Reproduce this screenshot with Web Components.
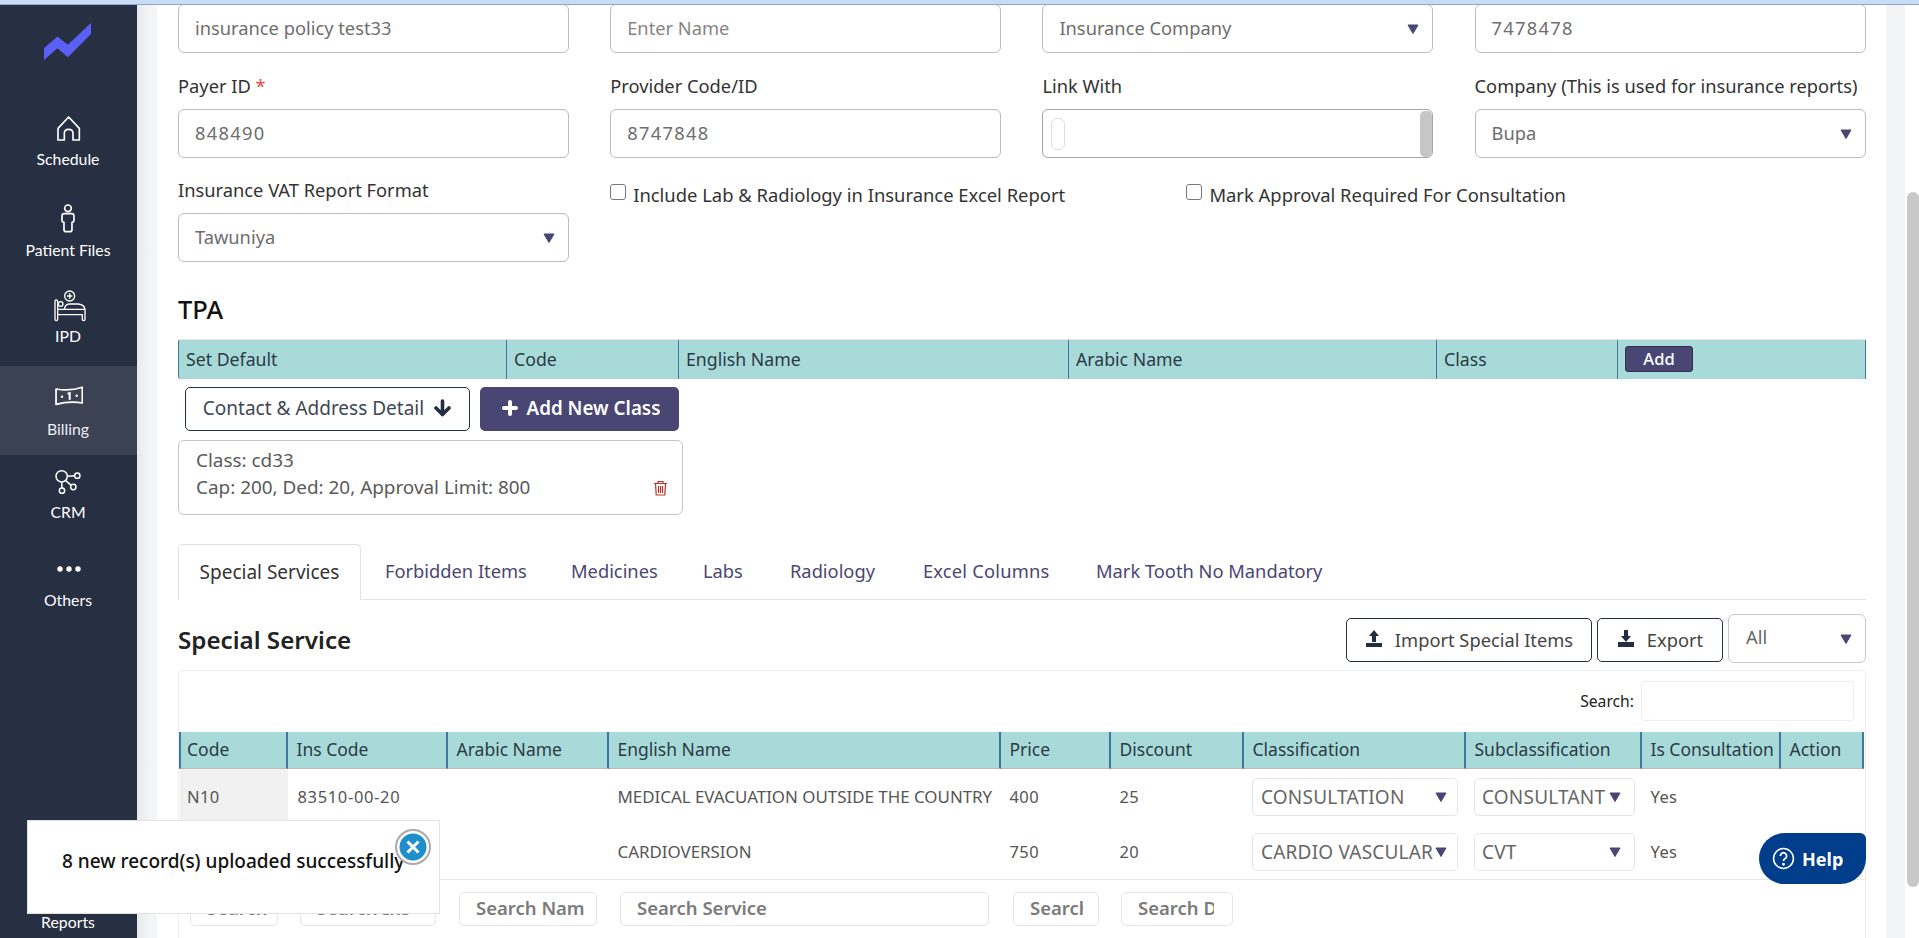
<!DOCTYPE html>
<html><head><meta charset="utf-8">
<style>
html,body{margin:0;height:100%;overflow:hidden;background:#fff;font-family:"Noto Sans",sans-serif}
</style></head><body>
<app-shell>
  <side-nav slot="nav">
    <nav-item style="--mt:53px;--gap:6px"><svg width="25" height="26.700" viewBox="165 345 75 80" fill="none" stroke="#fff" stroke-width="5" stroke-linejoin="round"><path d="M203 351 171 385v35h19v-20q0-12 13-12t13 12v20h19v-35z"/></svg><span slot="label">Schedule</span></nav-item>
    <nav-item style="--mt:34px;--gap:7px"><svg width="18.300" height="30" viewBox="175 610 55 90" fill="none" stroke="#fff" stroke-width="5" stroke-linejoin="round"><circle cx="202" cy="626" r="10"/><path d="M190 642h24q6 0 6 8v12q0 6-6 6v22q0 6-6 6h-12q-6 0-6-6v-22q-6 0-6-6v-12q0-8 6-8z"/></svg><span slot="label">Patient Files</span></nav-item>
    <nav-item style="--mt:30px;--gap:6px"><svg width="60" height="50" viewBox="0 0 180 150" fill="none" stroke="#fff" stroke-width="4" stroke-linejoin="round"><path d="M48 62q4-6 8 2v54q0 4-4 4t-4-4zM56 104h74v14q0 4 4 4t4-4V88q-2-14-20-16H90q-12 1-14 16M56 88h82"/><circle cx="65" cy="72" r="7"/><circle cx="92" cy="48" r="15"/><path d="M92 40v16M84 48h16" stroke-width="4.500"/></svg><span slot="label">IPD</span></nav-item>
    <nav-item active style="--mt:20px;--gap:8px"><svg width="28" height="20" viewBox="42 22 80 56" fill="none" stroke="#fff" stroke-width="5" stroke-linejoin="round"><path d="M45 30Q85 37 120 25V70Q85 63 45 74z"/><path d="M78 44l6-3v20" stroke-width="6"/><circle cx="62" cy="52" r="3.500" fill="#fff" stroke="none"/><circle cx="104" cy="49" r="3.500" fill="#fff" stroke="none"/></svg><span slot="label">Billing</span></nav-item>
    <nav-item style="--mt:11px;--gap:6px"><svg width="28.300" height="28.300" viewBox="50 262 85 85" fill="none" stroke="#fff" stroke-width="4.500"><circle cx="73" cy="290" r="17"/><circle cx="120" cy="288" r="8"/><circle cx="108" cy="322" r="8"/><circle cx="74" cy="333" r="8"/><path d="M90 290l22-2M85 303l17 14M73 307l1 18"/></svg><span slot="label">CRM</span></nav-item>
    <nav-item style="--mt:32px;--gap:6px"><svg width="30" height="30" viewBox="0 0 30 30" fill="#fff"><circle cx="6" cy="15" r="2.700"/><circle cx="15" cy="15" r="2.700"/><circle cx="24" cy="15" r="2.700"/></svg><span slot="label">Others</span></nav-item>
    <nav-item bottom><span slot="label">Reports</span></nav-item>
  </side-nav>

  <form-grid>
    <form-field nolabel style="margin-bottom:1px"><text-box>insurance policy test33</text-box></form-field>
    <form-field nolabel style="margin-bottom:1px"><text-box ph>Enter Name</text-box></form-field>
    <form-field nolabel style="margin-bottom:1px"><select-box>Insurance Company</select-box></form-field>
    <form-field nolabel style="margin-bottom:1px"><text-box num>7478478</text-box></form-field>

    <form-field><span slot="label">Payer ID <b style="color:#e44;font-weight:400">*</b></span><text-box num>848490</text-box></form-field>
    <form-field><span slot="label">Provider Code/ID</span><text-box num>8747848</text-box></form-field>
    <form-field><span slot="label">Link With</span><link-box></link-box></form-field>
    <form-field><span slot="label">Company (This is used for insurance reports)</span><select-box>Bupa</select-box></form-field>

    <form-field><span slot="label">Insurance VAT Report Format</span><select-box>Tawuniya</select-box></form-field>
    <check-line>Include Lab &amp; Radiology in Insurance Excel Report</check-line>
    <check-line style="grid-column:3/5;margin-left:144px">Mark Approval Required For Consultation</check-line>
  </form-grid>

  <section-title style="--mt:33px">TPA</section-title>
  <tpa-head></tpa-head>

  <action-row>
    <out-button style="width:285px">Contact &amp; Address Detail <svg slot="after" width="19" height="18" viewBox="0 0 19 18" fill="none" stroke="#252d40" stroke-width="3.600" stroke-linecap="round" stroke-linejoin="round"><path d="M9.500 2v13M3 9l6.500 6.500L16 9"/></svg></out-button>
    <solid-button></solid-button>
  </action-row>

  <class-card></class-card>

  <tab-strip></tab-strip>

  <service-head></service-head>

  <service-table></service-table>

  <toast-box></toast-box>
  <help-button></help-button>
</app-shell>

<template id="t-shell">
<style>
:host{display:flex;height:938px;overflow:hidden;position:relative;color:#333}
.band{position:absolute;left:0;right:0;top:0;height:4px;background:#c9dcf6;border-bottom:1px solid #8fa7c8;z-index:5}
.nav{flex:0 0 137px}
.gutter{flex:0 0 20px;background:linear-gradient(90deg,#e8eaee,#f4f5f7 70%)}
.page{flex:0 0 1729px;box-sizing:border-box;padding:4px 20px 0 21px;background:#fff;overflow:hidden}
.gutter.r{flex:0 0 19px;background:#f3f4f6}
.bar{flex:0 0 14px;background:#fff;display:flex;flex-direction:column}
.bar i{display:block;margin:192px 0 0 2px;height:695px;border-radius:6px;background:#c8c8c8}
</style>
<div class="band"></div>
<div class="nav"><slot name="nav"></slot></div>
<div class="gutter"></div>
<div class="page"><slot></slot></div>
<div class="gutter r"></div>
<div class="bar"><i></i></div>
</template>

<script>
const arrow='<svg class="arr" width="12" height="10" viewBox="0 0 12 10"><path d="M1 1h10L6 9.500z" fill="#4a4673" stroke="#4a4673" stroke-linejoin="round"/></svg>';
function define(name,html,init){
  customElements.define(name,class extends HTMLElement{
    connectedCallback(){
      if(this.shadowRoot)return;
      const r=this.attachShadow({mode:'open'});
      r.innerHTML=typeof html==='function'?html(this):html;
      if(init)init(r,this);
    }
  });
}
define('app-shell',()=>document.getElementById('t-shell').innerHTML);

define('side-nav',`<style>
:host{display:flex;flex-direction:column;height:938px;background:#272f43;box-sizing:border-box;padding-top:23px}
svg{display:block;margin:0 auto 0 44px;flex:none}
::slotted(nav-item[bottom]){margin-top:auto}
</style>
<svg width="47" height="37" viewBox="0 0 46.700 36.700"><path d="M0 25 13.300 13.300 23.700 21.700 46.700 0V11L23.700 34 13.300 25 0 36.700z" fill="#5a5ff5"/></svg>
<slot></slot>`);

define('nav-item',h=>`<style>
:host{display:block;margin-top:var(--mt,0);font:15.800px Lato,sans-serif;color:#fff;text-align:center}
:host([active]){background:#3a4254;padding:15px 0 16px;color:#eceef1}
:host([bottom]){padding-bottom:6px}
.i{display:flex;justify-content:center;align-items:center;height:30px}
.l{margin-top:var(--gap,5px);line-height:20px;padding-right:1px}
</style>${h.hasAttribute('bottom')?'':'<div class="i"><slot></slot></div>'}<div class="l"><slot name="label"></slot></div>`);

define('form-grid',`<style>
:host{display:grid;grid-template-columns:repeat(4,391px);column-gap:41.200px;row-gap:21px}
</style><slot></slot>`);

define('form-field',h=>`<style>
:host{display:block;font:18.300px "Noto Sans",sans-serif;color:#333}
.l{height:24px;line-height:22px;margin-bottom:10px;white-space:nowrap}
</style>${h.hasAttribute('nolabel')?'':'<div class="l"><slot name="label"></slot></div>'}<slot></slot>`);

const boxCss=`:host{display:flex;align-items:center;height:49px;box-sizing:border-box;border:1px solid #bdbdbd;border-radius:6px;background:#fff;padding:0 13px 2px 16px;font:18.300px "Noto Sans",sans-serif;color:#6e6e6e;white-space:nowrap}`;
define('text-box',`<style>${boxCss}:host([ph]){color:#858585}:host([num]){letter-spacing:1.300px}</style><slot></slot>`);
define('select-box',`<style>${boxCss}span{flex:1;overflow:hidden}svg{flex:none;margin-top:2px}</style><span><slot></slot></span>${arrow}`);
define('link-box',`<style>${boxCss}:host{border-color:#a5a5a5;padding:0;position:relative}
.chip{width:14px;height:32px;margin-left:8px;border:1px solid #ddd;border-radius:6px;box-sizing:border-box}
.sb{margin-left:auto;width:12px;height:46px;background:#c6c6c6;border-radius:5px}</style><div class="chip"></div><div class="sb"></div>`);
define('check-line',`<style>
:host{display:flex;align-items:center;gap:7px;height:24px;margin-top:3px;font:18.400px "Noto Sans",sans-serif;color:#333;white-space:nowrap}
i{flex:none;width:16px;height:16px;box-sizing:border-box;border:1px solid #767676;border-radius:3px;background:#fff;margin-top:-4px}
</style><i></i><span><slot></slot></span>`);

define('section-title',`<style>
:host{display:block;margin-top:var(--mt);font:500 25.500px/28px "Noto Sans",sans-serif;color:#111}
</style><slot></slot>`);

const headCell='box-sizing:border-box;border-right:1px solid #3f77a0;padding-left:7px;white-space:nowrap;overflow:hidden';
define('tpa-head',`<style>
:host{display:grid;grid-template-columns:328px 172px 390px 368px 181px 248px;margin-top:16px;height:40px;background:#a8dada;border-left:1px solid #3f77a0;border-top:1px solid #e6e6e6;box-sizing:border-box;border-radius:3px 0 0 3px;font:17.700px/39px "Noto Sans",sans-serif;color:#2c3a44}
div{${headCell}}
div:first-child{padding-left:8px}
b{display:inline-block;width:68px;height:26px;line-height:25px;border-radius:4px;background:#4a4673;color:#fff;font-weight:500;font-size:16.500px;text-align:center;vertical-align:1px;box-shadow:0 0 0 1px #33304f inset}
</style><div>Set Default</div><div>Code</div><div>English Name</div><div>Arabic Name</div><div>Class</div><div><b>Add</b></div>`);

define('action-row',`<style>:host{display:flex;gap:10px;margin:8px 0 0 7px}</style><slot></slot>`);
define('out-button',`<style>
:host{display:inline-flex;align-items:center;justify-content:center;gap:9px;height:44px;box-sizing:border-box;border:1px solid #252d40;border-radius:5px;background:#fff;padding-bottom:2px;font:19px "Noto Sans",sans-serif;color:#3f4756;white-space:nowrap}
</style><slot name="before"></slot><slot></slot><slot name="after"></slot>`);
define('solid-button',`<style>
:host{display:inline-flex;align-items:center;justify-content:center;gap:9px;width:199px;height:44px;box-sizing:border-box;padding:0 0 2px 3px;border-radius:5px;background:#4a4673;color:#fff;font:600 18.800px "Noto Sans",sans-serif;white-space:nowrap}
</style><svg width="16" height="16" viewBox="0 0 16 16"><path d="M8 2v12M2 8h12" stroke="#fff" stroke-width="4" stroke-linecap="round"/></svg><span>Add New Class</span>`);

define('class-card',`<style>
:host{display:flex;justify-content:space-between;align-items:flex-start;box-sizing:border-box;width:505px;height:75px;margin-top:9px;padding:6px 14px 0 17px;border:1px solid #c4c4c4;border-radius:6px;font:18.900px/27px "Noto Sans",sans-serif;color:#5a5a5a}
svg{margin-top:33px}
</style><div>Class: cd33<br>Cap: 200, Ded: 20, Approval Limit: 800</div>
<svg width="15" height="16" viewBox="0 0 15 16" fill="none" stroke="#b5342c" stroke-width="1.200"><path d="M1 3.500h13M5 3.500V1.500h5v2M2.500 3.500l.7 11.500h8.600l.7-11.500M5.500 6v7M7.500 6v7M9.500 6v7"/></svg>`);

define('tab-strip',`<style>
:host{display:flex;height:56px;margin-top:29px;box-sizing:border-box;border-bottom:1px solid #e5e5e5;font:18.300px "Noto Sans",sans-serif;color:#4a4673;white-space:nowrap}
div{box-sizing:border-box;padding-left:23px;line-height:54px;flex:none}
.a{width:183px;text-align:center;padding:0;color:#333;background:#fff;border:1px solid #e0e0e0;border-bottom:1px solid #fff;border-radius:5px 5px 0 0;height:56px;margin-right:1px;font-size:19px}
</style><div class="a">Special Services</div><div style="width:186px">Forbidden Items</div><div style="width:132px">Medicines</div><div style="width:87px">Labs</div><div style="width:133px">Radiology</div><div style="width:173px;letter-spacing:.2px">Excel Columns</div><div>Mark Tooth No Mandatory</div>`);

define('service-head',`<style>
:host{display:flex;align-items:center;height:52px;margin-top:14px;font:600 24.200px "Noto Sans",sans-serif;color:#222}
h2{all:unset;flex:1;margin-top:-2px}
.b{display:inline-flex;align-items:center;justify-content:center;gap:12px;height:44px;box-sizing:border-box;border:1px solid #252d40;border-radius:5px;background:#fff;padding-bottom:2px;font:400 18.300px "Noto Sans",sans-serif;color:#444;margin-right:5px}
.s{display:flex;align-items:center;justify-content:space-between;align-self:flex-start;width:138px;height:49px;box-sizing:border-box;border:1px solid #c8c8c8;border-radius:6px;padding:0 13px 4px 17px;font:400 18.300px "Noto Sans",sans-serif;color:#666}
.s svg{margin-top:4px}
</style><h2>Special Service</h2>
<div class="b" style="width:246px"><svg width="18" height="18" viewBox="0 0 18 18" fill="#252d40"><path d="M9 0l5 6h-3v6H7V6H4zM1 13h16v4H1z"/></svg>Import Special Items</div>
<div class="b" style="width:126px"><svg width="18" height="18" viewBox="0 0 18 18" fill="#252d40"><path d="M7 0h4v6h3l-5 6-5-6h3zM1 12h16v5H1z"/></svg>Export</div>
<div class="s">All${arrow}</div>`);

define('service-table',`<style>
:host{display:block;margin-top:4px;border:1px solid #eee;border-radius:4px 4px 0 0;height:300px;box-sizing:border-box;overflow:hidden;font:16.500px "Noto Sans",sans-serif;color:#555}
.search{display:flex;justify-content:flex-end;align-items:center;height:61px;box-sizing:border-box;padding:10px 11px 11px 0;gap:7px;font-size:15.700px;color:#222}
.search i{display:block;width:213px;height:40px;box-sizing:border-box;border:1px solid #eee;border-radius:3px}
.grid{display:grid;grid-template-columns:108px 160px 161px 392px 110px 133px 222px 176px 139px 83px;margin-left:1px}
.h{height:37px;background:#a8dada;line-height:34px;font-size:17.500px;color:#2c3a44;border-right:2px solid #3f77a0;border-bottom:1px solid #bbb;box-sizing:border-box;padding-left:8.500px;white-space:nowrap;overflow:hidden}
.h.f{border-left:2px solid #3f77a0;margin-left:-1px;padding-left:6px}
.c{height:55px;line-height:56px;box-sizing:border-box;padding-left:8.500px;white-space:nowrap;overflow:hidden;letter-spacing:.4px}
.c.sort{background:#f1f1f1;padding-left:7px}
.c.e{letter-spacing:0;font-size:16.900px}
.sel{display:flex;align-items:center;height:38px;box-sizing:border-box;border:1px solid #e6e6e6;border-radius:5px;margin:9px 8px 0 8px;padding:0 10px 0 8px;font-size:19px;letter-spacing:.2px;color:#666;line-height:34px}
.sel.sub{margin-right:7px;padding:0 13px 0 7px}
.sel span{flex:1;overflow:hidden;white-space:nowrap}
.sel:not(.sub) span{margin-right:2px}
.sel svg{flex:none}
.rule{border-top:1px solid #e8e8e8}
.foot{display:flex;padding:12px 0 0 11px;height:60px;box-sizing:border-box}
.foot div{height:34px;box-sizing:border-box;border:1px solid #e6e6e6;border-radius:5px;padding:0 0 0 16px;line-height:30px;font-weight:600;font-size:18.500px;color:#7b7b7b;white-space:nowrap;overflow:hidden;flex:none}
.foot span{display:block;overflow:hidden}
</style>
<div class="search">Search:<i></i></div>
<div class="grid">
<div class="h f">Code</div><div class="h">Ins Code</div><div class="h">Arabic Name</div><div class="h">English Name</div><div class="h">Price</div><div class="h">Discount</div><div class="h">Classification</div><div class="h">Subclassification</div><div class="h">Is Consultation</div><div class="h">Action</div>
<div class="c sort">N10</div><div class="c" style="letter-spacing:.65px;padding-left:9.500px">83510-00-20</div><div class="c"></div><div class="c e">MEDICAL EVACUATION OUTSIDE THE COUNTRY</div><div class="c">400</div><div class="c">25</div><div><div class="sel"><span>CONSULTATION</span>${arrow}</div></div><div><div class="sel sub"><span>CONSULTANT</span>${arrow}</div></div><div class="c">Yes</div><div class="c"></div>
<div class="c sort"></div><div class="c"></div><div class="c"></div><div class="c e">CARDIOVERSION</div><div class="c">750</div><div class="c">20</div><div><div class="sel"><span>CARDIO VASCULAR</span>${arrow}</div></div><div><div class="sel sub"><span>CVT</span>${arrow}</div></div><div class="c">Yes</div><div class="c"></div>
</div>
<div class="rule"></div>
<div class="foot"><div style="width:88px;margin-right:22px">Search</div><div style="width:136px;margin-right:23px">Search Ins</div><div style="width:138px;margin-right:23px"><span style="width:109px">Search Name</span></div><div style="width:369px;margin-right:24px"><span>Search Service</span></div><div style="width:86px;margin-right:22px"><span style="width:53px">Search</span></div><div style="width:112px"><span style="width:76px">Search Discount</span></div></div>`);

define('toast-box',`<style>
:host{position:absolute;left:27px;top:820px;width:413px;height:94px;box-sizing:border-box;background:#fff;border:1px solid #e2e2e2;z-index:6;font:500 19px "Noto Sans",sans-serif;color:#111}
p{margin:0;position:absolute;left:34px;top:27px;white-space:nowrap}
svg{position:absolute;left:367px;top:8px}
</style><p>8 new record(s) uploaded successfully</p>
<svg width="36" height="36" viewBox="0 0 36 36"><circle cx="18" cy="18" r="17" fill="#fff" stroke="#aaa" stroke-width="2"/><circle cx="18" cy="18" r="13.500" fill="#1e8fc9"/><path d="M12.500 12.500l11 11M23.500 12.500l-11 11" stroke="#fff" stroke-width="3"/></svg>`);

define('help-button',`<style>
:host{position:absolute;left:1759px;top:833px;width:107px;height:51px;box-sizing:border-box;display:flex;align-items:center;padding-left:13px;gap:7px;background:#003d8a;border-radius:26px 6px 26px 26px;color:#fff;font:700 18px "Noto Sans",sans-serif;z-index:4}
</style><svg width="23" height="23" viewBox="0 0 22 22" fill="none" stroke="#fff" stroke-width="1.500"><circle cx="11" cy="11" r="9.500"/><path d="M8 8.500a3 3 0 1 1 4.500 2.600c-1 .6-1.500 1.100-1.500 2.400" stroke-width="1.700"/><circle cx="11" cy="16.500" r=".6" fill="#fff"/></svg><span>Help</span>`);
</script>
</body></html>
